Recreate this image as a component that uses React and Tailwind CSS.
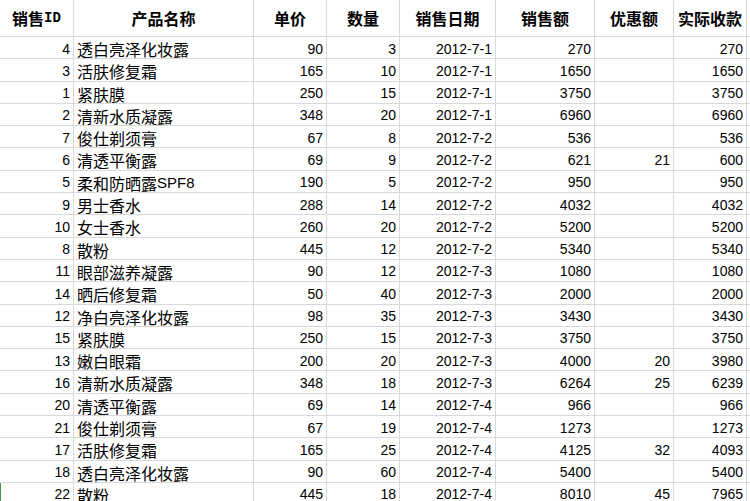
import React from "react";

const rows = [
  [4, "透白亮泽化妆露", 90, 3, "2012-7-1", 270, "", 270],
  [3, "活肤修复霜", 165, 10, "2012-7-1", 1650, "", 1650],
  [1, "紧肤膜", 250, 15, "2012-7-1", 3750, "", 3750],
  [2, "清新水质凝露", 348, 20, "2012-7-1", 6960, "", 6960],
  [7, "俊仕剃须膏", 67, 8, "2012-7-2", 536, "", 536],
  [6, "清透平衡露", 69, 9, "2012-7-2", 621, 21, 600],
  [5, "柔和防晒露SPF8", 190, 5, "2012-7-2", 950, "", 950],
  [9, "男士香水", 288, 14, "2012-7-2", 4032, "", 4032],
  [10, "女士香水", 260, 20, "2012-7-2", 5200, "", 5200],
  [8, "散粉", 445, 12, "2012-7-2", 5340, "", 5340],
  [11, "眼部滋养凝露", 90, 12, "2012-7-3", 1080, "", 1080],
  [14, "晒后修复霜", 50, 40, "2012-7-3", 2000, "", 2000],
  [12, "净白亮泽化妆露", 98, 35, "2012-7-3", 3430, "", 3430],
  [15, "紧肤膜", 250, 15, "2012-7-3", 3750, "", 3750],
  [13, "嫩白眼霜", 200, 20, "2012-7-3", 4000, 20, 3980],
  [16, "清新水质凝露", 348, 18, "2012-7-3", 6264, 25, 6239],
  [20, "清透平衡露", 69, 14, "2012-7-4", 966, "", 966],
  [21, "俊仕剃须膏", 67, 19, "2012-7-4", 1273, "", 1273],
  [17, "活肤修复霜", 165, 25, "2012-7-4", 4125, 32, 4093],
  [18, "透白亮泽化妆露", 90, 60, "2012-7-4", 5400, "", 5400],
  [22, "散粉", 445, 18, "2012-7-4", 8010, 45, 7965],
];

const headers = ["产品名称", "单价", "数量", "销售日期", "销售额", "优惠额", "实际收款"];

const grid =
  "grid grid-cols-[74px_180px_73px_73px_96px_99px_79px_73px_1fr]";

const num = "font-['Liberation_Sans',Arial,sans-serif] text-[14px]";
const cjk = "font-['Noto_Sans_CJK_SC',sans-serif] text-[16px]";

export default function App() {
  return (
    <div className="w-[750px] h-[501px] overflow-hidden bg-white text-black">
      <div className={`${grid} h-[37px] border-b border-[#d9d9d9]`}>
        <div className="flex items-center justify-center border-r border-[#d9d9d9] font-bold">
          <span className={cjk}>销售</span>
          <span className="font-['Liberation_Mono',monospace] text-[14px] font-bold">ID</span>
        </div>
        {headers.map((h) => (
          <div
            key={h}
            className={`flex items-center justify-center border-r border-[#d9d9d9] font-bold ${cjk}`}
          >
            {h}
          </div>
        ))}
        <div />
      </div>
      {rows.map((r, i) => (
        <div
          key={i}
          className={`${grid} h-[22.3px] border-b border-[#d9d9d9] ${i >= 20 ? "shadow-[inset_1px_0_0_#3c9a4a]" : ""}`}
        >
          <div className={`flex items-center justify-end pr-[3px] border-r border-[#d9d9d9] ${num}`}>{r[0]}</div>
          <div className={`flex items-center pl-[3px] border-r border-[#d9d9d9] whitespace-nowrap ${cjk}`}>
            {r[1].includes("SPF8") ? (
              <>
                {r[1].replace("SPF8", "")}
                <span className="font-['Liberation_Sans',Arial,sans-serif] text-[15px]">SPF8</span>
              </>
            ) : (
              r[1]
            )}
          </div>
          {r.slice(2).map((v, j) => (
            <div
              key={j}
              className={`flex items-center justify-end pr-[3px] border-r border-[#d9d9d9] ${num}`}
            >
              {v}
            </div>
          ))}
          <div />
        </div>
      ))}
    </div>
  );
}
